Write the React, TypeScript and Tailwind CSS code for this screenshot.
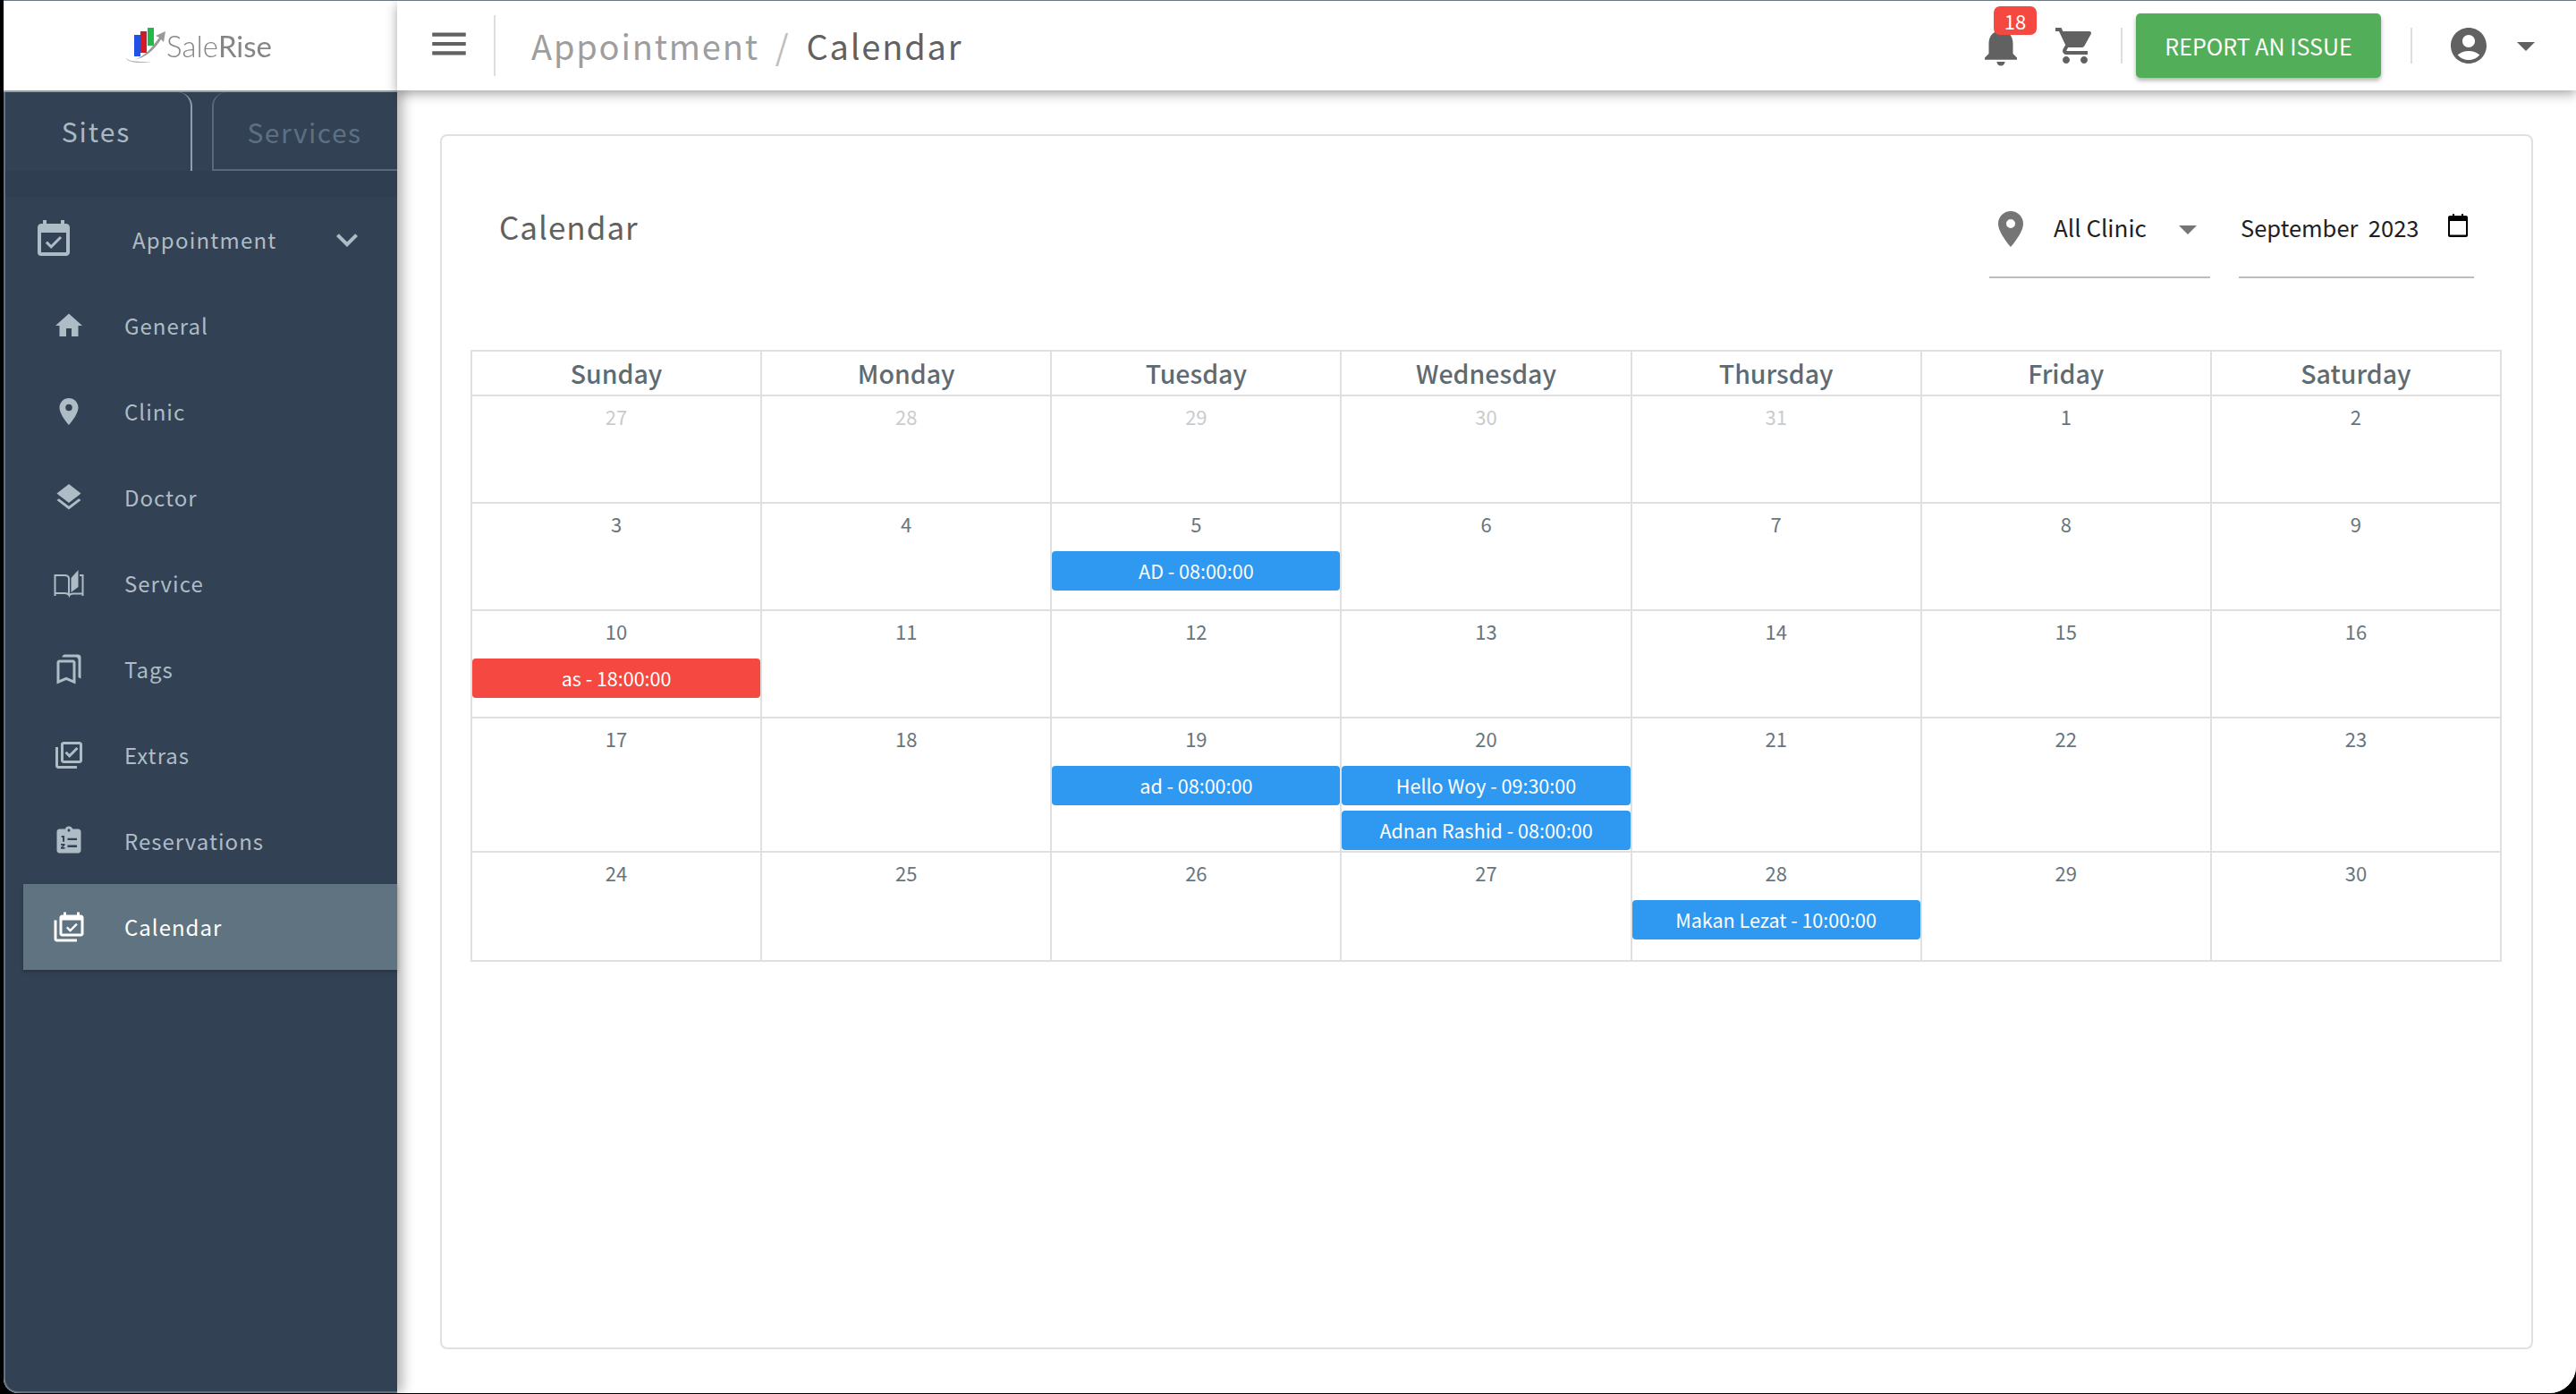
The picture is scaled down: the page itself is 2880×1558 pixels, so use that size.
import {
  MdAccountCircle,
  MdArrowDropDown,
  MdEventAvailable,
  MdHome,
  MdKeyboardArrowDown,
  MdLayers,
  MdLocationOn,
  MdMenu,
  MdNotifications,
  MdOutlineBookmarks,
  MdOutlineLibraryAddCheck,
  MdShoppingCart,
} from 'react-icons/md';

const OpenBook = ({ className }: { className?: string }) => (
  <svg viewBox="-1.5 -3 36 36" className={className}>
    <path
      d="M1 29V6h11c2 0 4 1 4.500 3v19c-1-1.500-3-2-4.500-2H1"
      fill="none"
      stroke="currentColor"
      strokeWidth="2"
    />
    <path d="M19 9l8-9v19l-8 6z" fill="currentColor" />
    <path
      d="M28.500 6H32v23M32 26.500H21c-1.500 0-3 .5-4.500 2"
      fill="none"
      stroke="currentColor"
      strokeWidth="2"
    />
  </svg>
);

const ClipboardNumbers = ({ className }: { className?: string }) => (
  <svg viewBox="0 0 24 24" className={className} fill="currentColor">
    <path
      fillRule="evenodd"
      d="M19 3h-4.200C14.400 1.800 13.300 1 12 1s-2.400.8-2.800 2H5c-1.100 0-2 .9-2 2v14c0 1.100.9 2 2 2h14c1.100 0 2-.9 2-2V5c0-1.100-.9-2-2-2zm-7 0c.55 0 1 .45 1 1s-.45 1-1 1-1-.45-1-1 .45-1 1-1zM6.500 8h2.200v4.500H7.400V9.300H6.500zM6 14h3v1.100l-1.600 1.500H9v1.200H6v-1.100l1.700-1.600H6zm5-4.200h7v1.600h-7zm0 5.200h7v1.600h-7z"
    />
  </svg>
);

const CalendarStack = ({ className }: { className?: string }) => (
  <svg viewBox="0 0 24 24" className={className} fill="currentColor">
    <path
      fillRule="evenodd"
      d="M21 3h-1V1h-2v2H10V1H8v2H7c-1.100 0-2 .9-2 2v12c0 1.100.9 2 2 2h14c1.100 0 2-.9 2-2V5c0-1.100-.9-2-2-2zm0 14H7V7h14zM3 7H1v14c0 1.100.9 2 2 2h15v-2H3zm15.500 3.300-1.100-1.100-4.400 4.400-1.900-1.900-1.100 1.100 3 3z"
    />
  </svg>
);

const PickerIcon = () => (
  <svg viewBox="0 0 24 26" className="w-[24px] h-[26px]" fill="#000">
    <path
      fillRule="evenodd"
      d="M6 0h2v2h8V0h2v2h3c1.100 0 2 .9 2 2v20c0 1.100-.9 2-2 2H3c-1.100 0-2-.9-2-2V4c0-1.100.9-2 2-2h3zM3 8v15.500h18V8z"
    />
  </svg>
);

const Logo = () => (
  <div className="flex items-center h-full pl-[134px] blur-[0.6px]">
    <svg viewBox="0 0 50 44" className="w-[50px] h-[44px] -mr-[2px] -mt-[4px]">
      <path d="M3 38c2 5 14 6 28 4-10 0-20 0-25-2z" fill="#b0b0b0" />
      <rect x="12" y="12" width="7" height="24" fill="#2250e0" />
      <rect x="19" y="8" width="7" height="24" fill="#d01c24" />
      <rect x="27" y="4" width="7" height="20" fill="#22b84a" />
      <path d="M12 40c12-4 20-14 28-25l-4-2 11-5-2 12-3-3c-7 11-16 20-30 23z" fill="#999" />
    </svg>
    <span className="font-['Lato',sans-serif] text-[33px] leading-none text-[#858585] font-light">
      Sale<span className="font-normal">Rise</span>
    </span>
  </div>
);

const navItems = [
  { label: 'General', icon: MdHome },
  { label: 'Clinic', icon: MdLocationOn },
  { label: 'Doctor', icon: MdLayers },
  { label: 'Service', icon: OpenBook },
  { label: 'Tags', icon: MdOutlineBookmarks },
  { label: 'Extras', icon: MdOutlineLibraryAddCheck },
  { label: 'Reservations', icon: ClipboardNumbers },
];

const Sidebar = () => (
  <aside className="w-[440px] shrink-0 flex flex-col bg-[#324154] border-l-2 border-b-2 border-[#5f7183] rounded-bl-[16px] shadow-[6px_0_14px_rgba(0,0,0,0.3)] z-10">
    <div className="h-[100px] -ml-[2px] bg-white">
      <Logo />
    </div>
    <div className="flex h-[90px] border-t-2 border-[#8fa3b3] -ml-[2px]">
      <div className="w-[209px] ml-[2px] border-r-2 border-[#8d9fad] rounded-tr-[16px] flex items-center justify-center pr-[4px] pb-[2px] text-[30px] leading-none tracking-[2px] text-[#aab8c3]">
        Sites
      </div>
      <div className="flex-1 ml-[22px] border-l-2 border-b-2 border-[#566a7c] rounded-tl-[16px] flex items-center justify-center pr-[2px] pt-[2px] text-[30px] leading-none tracking-[1.5px] text-[#5d7082]">
        Services
      </div>
    </div>
    <div className="h-[29px] bg-[#2f3e50]" />
    <div className="flex items-center h-[96px] pl-[30px] pr-[42px] text-[#aebcc6]">
      <MdEventAvailable className="w-[48px] h-[48px]" />
      <span className="ml-[64px] text-[24px] leading-none tracking-[1.2px]">Appointment</span>
      <MdKeyboardArrowDown className="w-[48px] h-[48px] ml-auto -mr-[10px]" />
    </div>
    <nav className="flex flex-col">
      {navItems.map((item) => {
        const Icon = item.icon;
        return (
          <div key={item.label} className="flex items-center h-[96px] pl-[53px] text-[#aebcc6]">
            <Icon className="w-[36px] h-[36px]" />
            <span className="ml-[44px] text-[24px] leading-none tracking-[1px]">{item.label}</span>
          </div>
        );
      })}
      <div className="flex items-center h-[96px] ml-[20px] pl-[33px] bg-[#607380] text-white shadow-[0_2px_4px_rgba(0,0,0,0.25)]">
        <CalendarStack className="w-[36px] h-[36px]" />
        <span className="ml-[44px] text-[24px] leading-none tracking-[1px]">Calendar</span>
      </div>
    </nav>
  </aside>
);

const Header = () => (
  <header className="h-[100px] flex items-center bg-white shadow-[0_4px_12px_rgba(0,0,0,0.35)] z-20 text-[#616161]">
    <MdMenu className="w-[50px] h-[50px] ml-[33px] -mt-[4px]" />
    <div className="w-[2px] h-[68px] ml-[25px] bg-[#dedede]" />
    <div className="ml-[40px] flex items-center text-[38px] leading-none tracking-[1.8px]">
      <span className="text-[#9e9e9e]">Appointment</span>
      <span className="ml-[18px] text-[#bdbdbd]">/</span>
      <span className="ml-[18px]">Calendar</span>
    </div>
    <div className="ml-auto flex items-center pr-[32px]">
      <div className="relative">
        <MdNotifications className="w-[54px] h-[54px]" />
        <span className="absolute left-[19px] -top-[17px] w-[48px] h-[32px] rounded-[7px] bg-[#f44840] text-white text-[22px] leading-[32px] text-center">
          18
        </span>
      </div>
      <MdShoppingCart className="w-[48px] h-[48px] ml-[32px]" />
      <div className="w-[2px] h-[40px] ml-[27px] bg-[#dedede]" />
      <button className="w-[274px] h-[72px] ml-[15px] rounded-[5px] bg-[#52ae58] text-white text-[25px] leading-none shadow-[0_3px_5px_rgba(0,0,0,0.3)]">
        REPORT AN ISSUE
      </button>
      <div className="w-[2px] h-[40px] ml-[33px] bg-[#dedede]" />
      <MdAccountCircle className="w-[48px] h-[48px] ml-[39px]" />
      <MdArrowDropDown className="w-[48px] h-[48px] ml-[16px]" />
    </div>
  </header>
);

type CalEvent = { text: string; color: string };

const rows: { day: number; muted?: boolean; events?: CalEvent[] }[][] = [
  [
    { day: 27, muted: true },
    { day: 28, muted: true },
    { day: 29, muted: true },
    { day: 30, muted: true },
    { day: 31, muted: true },
    { day: 1 },
    { day: 2 },
  ],
  [
    { day: 3 },
    { day: 4 },
    { day: 5, events: [{ text: 'AD - 08:00:00', color: 'bg-[#2f99f1]' }] },
    { day: 6 },
    { day: 7 },
    { day: 8 },
    { day: 9 },
  ],
  [
    { day: 10, events: [{ text: 'as - 18:00:00', color: 'bg-[#f44840]' }] },
    { day: 11 },
    { day: 12 },
    { day: 13 },
    { day: 14 },
    { day: 15 },
    { day: 16 },
  ],
  [
    { day: 17 },
    { day: 18 },
    { day: 19, events: [{ text: 'ad - 08:00:00', color: 'bg-[#2f99f1]' }] },
    {
      day: 20,
      events: [
        { text: 'Hello Woy - 09:30:00', color: 'bg-[#2f99f1]' },
        { text: 'Adnan Rashid - 08:00:00', color: 'bg-[#2f99f1]' },
      ],
    },
    { day: 21 },
    { day: 22 },
    { day: 23 },
  ],
  [
    { day: 24 },
    { day: 25 },
    { day: 26 },
    { day: 27 },
    { day: 28, events: [{ text: 'Makan Lezat - 10:00:00', color: 'bg-[#2f99f1]' }] },
    { day: 29 },
    { day: 30 },
  ],
];

const days = ['Sunday', 'Monday', 'Tuesday', 'Wednesday', 'Thursday', 'Friday', 'Saturday'];

const CalendarGrid = () => (
  <div className="ml-[32px] mr-[33px] grid grid-cols-7 grid-rows-[50px_120px_120px_120px_150px_122px] border-r-2 border-b-2 border-[#e0e0e0]">
    {days.map((d) => (
      <div
        key={d}
        className="flex items-center justify-center border-l-2 border-t-2 border-[#e0e0e0] text-[28.500px] leading-none font-medium text-[#5f6b73]"
      >
        {d}
      </div>
    ))}
    {rows.flat().map((cell, i) => (
      <div key={i} className="flex flex-col border-l-2 border-t-2 border-[#e0e0e0]">
        <div
          className={`h-[53px] pb-[10px] flex items-center justify-center text-[22px] leading-none ${
            cell.muted ? 'text-[#c9ccce]' : 'text-[#69757c]'
          }`}
        >
          {cell.day}
        </div>
        <div className="flex flex-col gap-[6px]">
          {cell.events?.map((e) => (
            <div
              key={e.text}
              className={`h-[44px] rounded-[4px] flex items-center justify-center text-white text-[21.500px] leading-none ${e.color}`}
            >
              {e.text}
            </div>
          ))}
        </div>
      </div>
    ))}
  </div>
);

const Filters = () => (
  <div className="flex gap-[32px] text-[26px] leading-none text-[#212121] whitespace-nowrap">
    <div className="w-[247px] h-[93px] flex items-start pt-[14px] border-b-2 border-[#bdbdbd]">
      <MdLocationOn className="w-[48px] h-[48px] shrink-0 text-[#757575]" />
      <span className="ml-[24px] mt-[9px]">All Clinic</span>
      <MdArrowDropDown className="w-[48px] h-[48px] shrink-0 ml-[22px] text-[#757575]" />
    </div>
    <div className="w-[263px] h-[93px] flex items-start pt-[23px] pl-[2px] border-b-2 border-[#bdbdbd]">
      <span className="text-[25.500px]">September&nbsp; 2023</span>
      <div className="ml-[32px] -mt-[2px]">
        <PickerIcon />
      </div>
    </div>
  </div>
);

const App = () => (
  <div className="w-screen h-screen bg-black pl-[4px] pb-[1px] overflow-hidden font-['Noto_Sans_CJK_SC','Source_Sans_Pro',sans-serif]">
    <div className="h-full flex bg-white border-t border-[#6b7683] rounded-br-[30px] rounded-bl-[16px] overflow-hidden">
      <Sidebar />
      <main className="flex-1 flex flex-col min-w-0 bg-white">
        <Header />
        <div className="flex-1 min-h-0 pt-[49px] pb-[49px] pl-[48px] pr-[48px]">
          <section className="h-full rounded-[8px] border-2 border-[#e0e0e0] bg-white">
            <div className="h-[239px] flex pt-[66px] pl-[64px] pr-[64px] justify-between">
              <h1 className="pt-[17px] text-[35px] leading-none tracking-[1px] text-[#616161]">Calendar</h1>
              <Filters />
            </div>
            <CalendarGrid />
          </section>
        </div>
      </main>
    </div>
  </div>
);

export default App;
